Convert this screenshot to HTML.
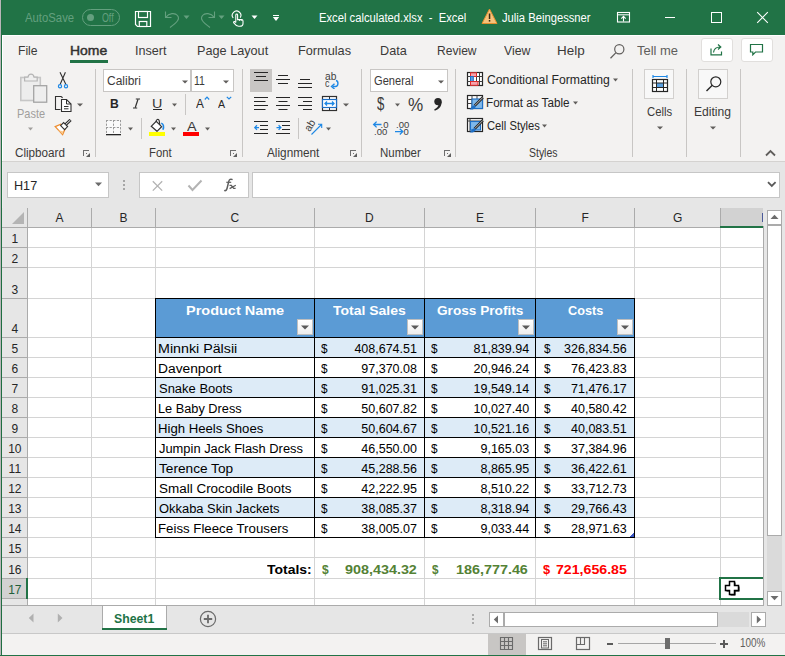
<!DOCTYPE html>
<html><head><meta charset="utf-8"><title>Excel</title>
<style>
html,body{margin:0;padding:0;}
body{width:785px;height:656px;overflow:hidden;position:relative;background:#F3F2F1;font-family:'Liberation Sans', sans-serif;}
#r{position:absolute;left:0;top:0;width:785px;height:656px;overflow:hidden;}
#r div,#r svg{position:absolute;box-sizing:content-box;}
#r .t{white-space:pre;}
</style></head><body><div id="r">
<div style="left:0px;top:0px;width:785px;height:656px;background:#F3F2F1;"></div>
<div style="left:0px;top:0px;width:785px;height:35px;background:#217346;"></div>
<div style="left:2px;top:35px;width:783px;height:1px;background:#FFFFFF;"></div>
<div style="left:0px;top:161px;width:785px;height:47px;background:#E6E6E6;"></div>
<div style="left:0px;top:161px;width:785px;height:1px;background:#D4D2D0;"></div>
<div style="left:0px;top:208px;width:785px;height:398px;background:#E6E6E6;"></div>
<div style="left:0px;top:605px;width:785px;height:28px;background:#E6E6E6;"></div>
<div style="left:0px;top:634px;width:785px;height:22px;background:#F3F2F1;"></div>
<div class="t" style="left:25.30px;top:12.00px;font: 400 12px/12px 'Liberation Sans', sans-serif;color:#64A07F;transform:scaleX(0.9434);transform-origin:0 0;">AutoSave</div>
<div style="left:82px;top:9px;width:36px;height:15px;border:1px solid #64A07F;border-radius:9px;"></div>
<div style="left:87px;top:14px;width:7px;height:7px;background:#64A07F;border-radius:50%;"></div>
<div class="t" style="left:101.50px;top:12.00px;font: 400 12px/12px 'Liberation Sans', sans-serif;color:#64A07F;transform:scaleX(0.7355);transform-origin:0 0;">Off</div>
<svg style="left:134px;top:10px;" width="18" height="18" viewBox="0 0 18 18"><path d="M1.5 1.5 H16.5 V16.5 H3.5 L1.5 14.5 Z" fill="none" stroke="#fff" stroke-width="1.2"/><rect x="4.5" y="1.5" width="9" height="6" fill="none" stroke="#fff" stroke-width="1.2"/><rect x="5.3" y="11.5" width="7.5" height="5" fill="none" stroke="#fff" stroke-width="1.2"/></svg>
<svg style="left:162px;top:9px;" width="20" height="20" viewBox="0 0 20 20"><path d="M3.5 2.5 V8.5 H9.5" fill="none" stroke="#64A07F" stroke-width="1.1"/><path d="M3.8 8.3 C7 4 13 3.5 15.5 6.5 C18 9.5 16 13 8 18.5" fill="none" stroke="#64A07F" stroke-width="1.1"/></svg>
<svg style="left:183px;top:15px;" width="8" height="5" viewBox="0 0 8 5"><path d="M0.5 0.5 H6.5 L3.5 4 Z" fill="#64A07F"/></svg>
<svg style="left:198px;top:9px;" width="20" height="20" viewBox="0 0 20 20"><path d="M16.5 2.5 V8.5 H10.5" fill="none" stroke="#64A07F" stroke-width="1.1"/><path d="M16.2 8.3 C13 4 7 3.5 4.5 6.5 C2 9.5 4 13 12 18.5" fill="none" stroke="#64A07F" stroke-width="1.1"/></svg>
<svg style="left:218px;top:15px;" width="8" height="5" viewBox="0 0 8 5"><path d="M0.5 0.5 H6.5 L3.5 4 Z" fill="#64A07F"/></svg>
<svg style="left:230px;top:10px;" width="15" height="18" viewBox="0 0 15 18"><path d="M3.2 8 A4.3 4.3 0 1 1 10.2 7.6" fill="none" stroke="#fff" stroke-width="1.1"/><path d="M5.8 12.5 V4.9 A0.9 0.9 0 0 1 7.6 4.9 V9.6 H11.6 C12.6 9.6 13 10.2 13 11 V13.5 C13 15.3 11.8 16.3 9.8 16.3 H8.6 C6.8 16.3 5.6 15.3 3.8 12.9 C3.2 12.1 3.8 11.2 4.6 11.6 L5.8 12.5" fill="none" stroke="#fff" stroke-width="1.1"/><path d="M9.5 9.6 V11 M11.3 9.6 V11" stroke="#fff" stroke-width="0.8"/></svg>
<svg style="left:251px;top:15px;" width="8" height="5" viewBox="0 0 8 5"><path d="M0.5 0.5 H6.5 L3.5 4 Z" fill="#fff"/></svg>
<div style="left:273px;top:15px;width:6px;height:1px;background:#fff;"></div>
<svg style="left:272px;top:16px;" width="8" height="6" viewBox="0 0 8 6"><path d="M0.8 1 H7.2 L4 5 Z" fill="#fff"/></svg>
<div class="t" style="left:319.00px;top:12.00px;font: 400 12px/12px 'Liberation Sans', sans-serif;color:#FFFFFF;transform:scaleX(0.9348);transform-origin:0 0;">Excel calculated.xlsx  -  Excel</div>
<svg style="left:481px;top:8px;" width="17" height="17" viewBox="0 0 17 17"><path d="M8.5 1 L16 15.5 H1 Z" fill="#F7C27A" stroke="#E58F2E" stroke-width="1"/><rect x="7.8" y="5.5" width="1.5" height="5.5" fill="#3A2A10"/><rect x="7.8" y="12" width="1.5" height="1.6" fill="#3A2A10"/></svg>
<div class="t" style="left:502.00px;top:12.00px;font: 400 12px/12px 'Liberation Sans', sans-serif;color:#FFFFFF;transform:scaleX(0.9353);transform-origin:0 0;">Julia Beingessner</div>
<svg style="left:616px;top:11px;" width="15" height="12" viewBox="0 0 15 12"><rect x="1.5" y="1.5" width="12" height="9.5" fill="none" stroke="#fff" stroke-width="1.1"/><path d="M1.5 3.8 H13.5" stroke="#fff" stroke-width="1"/><path d="M7.5 10.5 V5.5 M5.3 7.6 L7.5 5.4 L9.7 7.6" fill="none" stroke="#fff" stroke-width="1.1"/></svg>
<div style="left:665px;top:17px;width:10px;height:1px;background:#fff;"></div>
<div style="left:711px;top:12px;width:9px;height:9px;border:1px solid #fff;"></div>
<svg style="left:756px;top:11px;" width="13" height="13" viewBox="0 0 13 13"><path d="M1.2 1.2 L11.8 11.8 M11.8 1.2 L1.2 11.8" stroke="#fff" stroke-width="1.1"/></svg>
<div class="t" style="left:18.37px;top:44.00px;font: 400 13px/13px 'Liberation Sans', sans-serif;color:#3B3A39;transform:scaleX(0.9332);transform-origin:0 0;">File</div>
<div class="t" style="left:69.63px;top:44.00px;font: 400 13px/13px 'Liberation Sans', sans-serif;color:#323130;transform:scaleX(1.0733);transform-origin:0 0;-webkit-text-stroke:0.45px #323130;">Home</div>
<div style="left:70px;top:60px;width:38px;height:3px;background:#217346;"></div>
<div class="t" style="left:134.53px;top:44.00px;font: 400 13px/13px 'Liberation Sans', sans-serif;color:#3B3A39;transform:scaleX(0.9686);transform-origin:0 0;">Insert</div>
<div class="t" style="left:196.82px;top:44.00px;font: 400 13px/13px 'Liberation Sans', sans-serif;color:#3B3A39;transform:scaleX(0.9752);transform-origin:0 0;">Page Layout</div>
<div class="t" style="left:298.02px;top:44.00px;font: 400 13px/13px 'Liberation Sans', sans-serif;color:#3B3A39;transform:scaleX(0.9781);transform-origin:0 0;">Formulas</div>
<div class="t" style="left:380.33px;top:44.00px;font: 400 13px/13px 'Liberation Sans', sans-serif;color:#3B3A39;transform:scaleX(0.9732);transform-origin:0 0;">Data</div>
<div class="t" style="left:436.87px;top:44.00px;font: 400 13px/13px 'Liberation Sans', sans-serif;color:#3B3A39;transform:scaleX(0.9281);transform-origin:0 0;">Review</div>
<div class="t" style="left:504.00px;top:44.00px;font: 400 13px/13px 'Liberation Sans', sans-serif;color:#3B3A39;transform:scaleX(0.9456);transform-origin:0 0;">View</div>
<div class="t" style="left:556.96px;top:44.00px;font: 400 13px/13px 'Liberation Sans', sans-serif;color:#3B3A39;transform:scaleX(1.0350);transform-origin:0 0;">Help</div>
<svg style="left:609px;top:43px;" width="17" height="17" viewBox="0 0 17 17"><circle cx="10.3" cy="6.3" r="4.6" fill="none" stroke="#605E5C" stroke-width="1.2"/><path d="M7 9.6 L1.5 15.2" stroke="#605E5C" stroke-width="1.3"/></svg>
<div class="t" style="left:636.50px;top:44.00px;font: 400 13px/13px 'Liberation Sans', sans-serif;color:#605E5C;transform:scaleX(0.9964);transform-origin:0 0;">Tell me</div>
<div style="left:701px;top:38px;width:30px;height:22px;border:1px solid #E1DFDD;border-radius:3px;background:#FFFFFF;"></div>
<svg style="left:709px;top:43px;" width="15" height="13" viewBox="0 0 15 13"><path d="M2 5.5 V11.8 H12.5 V8.5" fill="none" stroke="#217346" stroke-width="1.2"/><path d="M4.5 9.5 C5 5.5 7.5 4 11 4 M9 1.5 L11.8 4 L9 6.5" fill="none" stroke="#217346" stroke-width="1.2"/></svg>
<div style="left:741px;top:38px;width:30px;height:22px;border:1px solid #E1DFDD;border-radius:3px;background:#FFFFFF;"></div>
<svg style="left:749px;top:43px;" width="15" height="13" viewBox="0 0 15 13"><path d="M1.5 1.5 H13.5 V9 H6.5 L3.8 11.8 V9 H1.5 Z" fill="none" stroke="#217346" stroke-width="1.2"/></svg>
<svg style="left:19px;top:72px;" width="30" height="32" viewBox="0 0 30 32"><rect x="1.8" y="5.5" width="19.5" height="23" fill="#EDEDED" stroke="#C6C6C6" stroke-width="1.6"/><path d="M5.6 9 V5.2 H9 C9.5 1.2 14.5 1.2 15 5.2 H18.2 V9 Z" fill="#EFEFEF" stroke="#B5B5B5" stroke-width="1.2"/><rect x="14.7" y="13.7" width="13" height="16.5" fill="#EEEEEE" stroke="#A4A4A4" stroke-width="1.3"/></svg>
<div class="t" style="left:17.16px;top:107.00px;font: 400 13px/13px 'Liberation Sans', sans-serif;color:#A19F9D;transform:scaleX(0.8434);transform-origin:0 0;">Paste</div>
<svg style="left:28px;top:127px;" width="5" height="4" viewBox="0 0 5 4"><path d="M0 0.5 H5 L2.5 3.6 Z" fill="#A19F9D"/></svg>
<svg style="left:57px;top:71px;" width="13" height="18" viewBox="0 0 13 18"><path d="M3 1.2 L8.8 13.2 M8.4 1.2 L3.2 13.2" stroke="#303030" stroke-width="1.1"/><circle cx="3" cy="15.2" r="1.6" fill="none" stroke="#1E88E5" stroke-width="1.2"/><circle cx="9" cy="15.2" r="1.6" fill="none" stroke="#1E88E5" stroke-width="1.2"/></svg>
<svg style="left:54px;top:95px;" width="19" height="18" viewBox="0 0 19 18"><path d="M7.2 1.5 H1.5 V14.5 H6.5 M7.2 1.5 L8.6 2.9" fill="none" stroke="#303030" stroke-width="1.1"/><path d="M7.5 4.5 H12.5 L17 9 V16.5 H7.5 Z" fill="#fff" stroke="#303030" stroke-width="1.1"/><path d="M12.5 4.5 V9 H17" fill="none" stroke="#303030" stroke-width="1"/><path d="M10 11.5 H14.5 M10 13.8 H14.5" stroke="#303030" stroke-width="1"/></svg>
<svg style="left:77px;top:103px;" width="6" height="4" viewBox="0 0 6 4"><path d="M0 0.5 H6 L3.0 3.6 Z" fill="#605E5C"/></svg>
<svg style="left:54px;top:119px;" width="19" height="17" viewBox="0 0 19 17"><path d="M1.2 7.6 L6.8 5.2 L11.2 9.6 L8.6 15.6 Z" fill="#fff" stroke="#ED8B2C" stroke-width="1.3"/><path d="M4 11 L9.5 12.5 L8.6 15.2 Z" fill="#F9C98E"/><path d="M6.6 6.6 L9.6 3.6 L13.6 7.6 L10.6 10.6 Z" fill="#fff" stroke="#303030" stroke-width="1.1"/><path d="M11.6 5.6 L16.6 0.9" stroke="#303030" stroke-width="3"/><path d="M11.8 5.4 L16.4 1.1" stroke="#fff" stroke-width="1"/></svg>
<div class="t" style="left:15.00px;top:147.00px;font: 400 12px/12px 'Liberation Sans', sans-serif;color:#3B3A39;transform:scaleX(0.9726);transform-origin:0 0;">Clipboard</div>
<svg style="left:83px;top:150px;" width="8" height="8" viewBox="0 0 8 8"><rect x="0" y="0" width="6" height="1" fill="#6E6E6E"/><rect x="0" y="0" width="1" height="6" fill="#6E6E6E"/><rect x="3" y="3" width="1" height="1" fill="#6E6E6E"/><path d="M7 3 V7 H3 Z" fill="#5E5E5E"/></svg>
<div style="left:95px;top:69px;width:1px;height:88px;background:#C8C6C4;"></div>
<div style="left:103px;top:69px;width:86px;height:21px;border:1px solid #C8C6C4;background:#FFFFFF;"></div>
<div style="left:191px;top:69px;width:41px;height:21px;border:1px solid #C8C6C4;background:#FFFFFF;"></div>
<div class="t" style="left:106.80px;top:75.00px;font: 400 12.5px/12.5px 'Liberation Sans', sans-serif;color:#3B3A39;transform:scaleX(0.9582);transform-origin:0 0;">Calibri</div>
<svg style="left:182px;top:80px;" width="6" height="4" viewBox="0 0 6 4"><path d="M0 0.5 H6 L3.0 3.6 Z" fill="#605E5C"/></svg>
<div class="t" style="left:194.40px;top:75.00px;font: 400 12.5px/12.5px 'Liberation Sans', sans-serif;color:#3B3A39;transform:scaleX(0.8369);transform-origin:0 0;">11</div>
<svg style="left:223px;top:80px;" width="6" height="4" viewBox="0 0 6 4"><path d="M0 0.5 H6 L3.0 3.6 Z" fill="#605E5C"/></svg>
<div class="t" style="left:109.80px;top:97.00px;font: 700 13px/13px 'Liberation Sans', sans-serif;color:#262626;transform:scaleX(0.9333);transform-origin:0 0;">B</div>
<svg style="left:132px;top:98px;" width="9" height="11" viewBox="0 0 9 11"><path d="M6 1.2 L3.2 9.8" stroke="#303030" stroke-width="1.2"/><path d="M3.8 1 H8 M1 10 H5.2" stroke="#303030" stroke-width="1"/></svg>
<div class="t" style="left:152.10px;top:97.00px;font: 400 13px/13px 'Liberation Sans', sans-serif;color:#3A3A3A;transform:scaleX(1.1000);transform-origin:0 0;">U</div>
<div style="left:153px;top:109px;width:9px;height:1px;background:#262626;"></div>
<svg style="left:172px;top:103px;" width="5" height="4" viewBox="0 0 5 4"><path d="M0 0.5 H5 L2.5 3.6 Z" fill="#605E5C"/></svg>
<div style="left:185px;top:94px;width:1px;height:21px;background:#C8C6C4;"></div>
<div class="t" style="left:196.30px;top:98.00px;font: 400 12.5px/12.5px 'Liberation Sans', sans-serif;color:#262626;transform:scaleX(0.9444);transform-origin:0 0;">A</div>
<svg style="left:204px;top:96px;" width="6" height="4" viewBox="0 0 6 4"><path d="M0.8 3.5 L3 1.2 L5.2 3.5" fill="none" stroke="#1E88E5" stroke-width="1.2"/></svg>
<div class="t" style="left:218.00px;top:99.00px;font: 400 11px/11px 'Liberation Sans', sans-serif;color:#262626;transform:scaleX(0.9625);transform-origin:0 0;">A</div>
<svg style="left:226px;top:96px;" width="6" height="4" viewBox="0 0 6 4"><path d="M0.8 0.8 L3 3 L5.2 0.8" fill="none" stroke="#1E88E5" stroke-width="1.2"/></svg>
<svg style="left:106px;top:120px;" width="16" height="16" viewBox="0 0 16 16"><rect x="0.5" y="0.5" width="14" height="13.5" fill="#FAFAFA"/><path d="M0 0.5 H15 M0 7.5 H15 M0.5 0 V14 M7.5 0 V14 M14.5 0 V14" fill="none" stroke="#9A9A9A" stroke-width="1" stroke-dasharray="2.2 1.4"/><rect x="0" y="14" width="15" height="1.3" fill="#262626"/></svg>
<svg style="left:128px;top:127px;" width="5" height="4" viewBox="0 0 5 4"><path d="M0 0.5 H5 L2.5 3.6 Z" fill="#605E5C"/></svg>
<div style="left:141px;top:118px;width:1px;height:21px;background:#C8C6C4;"></div>
<svg style="left:149px;top:118px;" width="17" height="14" viewBox="0 0 17 14"><path d="M2.2 8.3 L7.2 3.3 L12.6 8.7 L8 13.3 Z" fill="#fff" stroke="#303030" stroke-width="1.2"/><path d="M7.2 3.6 C6.8 1.2 9.6 0.6 10.2 2.6 L10.8 6.8" fill="none" stroke="#303030" stroke-width="1.1"/><path d="M12.2 5.2 C14.4 5.6 15.2 8.4 13.9 11.8" fill="none" stroke="#1E88E5" stroke-width="1.6"/></svg>
<div style="left:149px;top:132px;width:16px;height:4px;background:#FFFF00;"></div>
<svg style="left:171px;top:127px;" width="5" height="4" viewBox="0 0 5 4"><path d="M0 0.5 H5 L2.5 3.6 Z" fill="#605E5C"/></svg>
<div class="t" style="left:186.70px;top:120.00px;font: 400 13.5px/13.5px 'Liberation Sans', sans-serif;color:#3A3A3A;transform:scaleX(1.0667);transform-origin:0 0;">A</div>
<div style="left:183px;top:132px;width:16px;height:4px;background:#FF0000;"></div>
<svg style="left:205px;top:127px;" width="5" height="4" viewBox="0 0 5 4"><path d="M0 0.5 H5 L2.5 3.6 Z" fill="#605E5C"/></svg>
<div class="t" style="left:148.50px;top:147.00px;font: 400 12px/12px 'Liberation Sans', sans-serif;color:#3B3A39;transform:scaleX(0.9442);transform-origin:0 0;">Font</div>
<svg style="left:230px;top:150px;" width="8" height="8" viewBox="0 0 8 8"><rect x="0" y="0" width="6" height="1" fill="#6E6E6E"/><rect x="0" y="0" width="1" height="6" fill="#6E6E6E"/><rect x="3" y="3" width="1" height="1" fill="#6E6E6E"/><path d="M7 3 V7 H3 Z" fill="#5E5E5E"/></svg>
<div style="left:242px;top:69px;width:1px;height:88px;background:#C8C6C4;"></div>
<div style="left:250px;top:69px;width:22px;height:23px;background:#C8C6C4;"></div>
<svg style="left:254px;top:71px;" width="14" height="20" viewBox="0 0 14 20"><rect x="0" y="1" width="14" height="1" fill="#262626"/><rect x="2.0" y="5" width="10" height="1" fill="#262626"/><rect x="0" y="9" width="14" height="1" fill="#262626"/></svg>
<svg style="left:276px;top:73px;" width="14" height="20" viewBox="0 0 14 20"><rect x="2.0" y="2" width="10" height="1" fill="#262626"/><rect x="0" y="6" width="14" height="1" fill="#262626"/><rect x="2.0" y="10" width="10" height="1" fill="#262626"/></svg>
<svg style="left:298px;top:77px;" width="14" height="20" viewBox="0 0 14 20"><rect x="2.0" y="2" width="10" height="1" fill="#262626"/><rect x="0" y="6" width="14" height="1" fill="#262626"/><rect x="0" y="10" width="14" height="1" fill="#262626"/></svg>
<div class="t" style="left:324.70px;top:71.00px;font: 400 10.5px/10.5px 'Liberation Sans', sans-serif;color:#404040;transform:scaleX(0.9713);transform-origin:0 0;">ab</div>
<div class="t" style="left:324.70px;top:78.00px;font: 400 10.5px/10.5px 'Liberation Sans', sans-serif;color:#404040;transform:scaleX(0.8400);transform-origin:0 0;">c</div>
<svg style="left:329px;top:79px;" width="11" height="10" viewBox="0 0 11 10"><path d="M4 7.5 H6.5 C9.5 7.5 9.8 2 7 1.5" fill="none" stroke="#1E88E5" stroke-width="1.4"/><path d="M5.5 4.7 L2.5 7.5 L5.5 10" fill="none" stroke="#1E88E5" stroke-width="1.4"/></svg>
<svg style="left:254px;top:96px;" width="14" height="20" viewBox="0 0 14 20"><rect x="0" y="1" width="14" height="1" fill="#262626"/><rect x="2.5" y="5" width="9" height="1" fill="#262626"/><rect x="0" y="9" width="14" height="1" fill="#262626"/><rect x="2.5" y="13" width="9" height="1" fill="#262626"/></svg>
<svg style="left:254px;top:96px;" width="14" height="15" viewBox="0 0 14 15"><rect x="0" y="1" width="14" height="1" fill="#262626"/><rect x="0" y="5" width="9" height="1" fill="#262626"/><rect x="0" y="9" width="14" height="1" fill="#262626"/><rect x="0" y="13" width="9" height="1" fill="#262626"/></svg>
<svg style="left:276px;top:96px;" width="14" height="15" viewBox="0 0 14 15"><rect x="0" y="1" width="14" height="1" fill="#262626"/><rect x="2.5" y="5" width="9" height="1" fill="#262626"/><rect x="0" y="9" width="14" height="1" fill="#262626"/><rect x="2.5" y="13" width="9" height="1" fill="#262626"/></svg>
<svg style="left:298px;top:96px;" width="14" height="15" viewBox="0 0 14 15"><rect x="0" y="1" width="14" height="1" fill="#262626"/><rect x="5" y="5" width="9" height="1" fill="#262626"/><rect x="0" y="9" width="14" height="1" fill="#262626"/><rect x="5" y="13" width="9" height="1" fill="#262626"/></svg>
<svg style="left:321px;top:95px;" width="17" height="17" viewBox="0 0 17 17"><rect x="1.5" y="1.5" width="14" height="14" fill="#fff" stroke="#303030" stroke-width="1.2"/><path d="M8.5 1.5 V4.5 M8.5 12.5 V15.5" stroke="#303030" stroke-width="1"/><rect x="1.5" y="4.5" width="14" height="8" fill="#fff" stroke="#1E6FC5" stroke-width="1.2"/><path d="M4 8.5 H13 M6 6.5 L4 8.5 L6 10.5 M11 6.5 L13 8.5 L11 10.5" fill="none" stroke="#1E88E5" stroke-width="1.3"/></svg>
<svg style="left:343px;top:103px;" width="6" height="4" viewBox="0 0 6 4"><path d="M0 0.5 H6 L3.0 3.6 Z" fill="#605E5C"/></svg>
<svg style="left:254px;top:120px;" width="15" height="15" viewBox="0 0 15 15"><rect x="0" y="1" width="14" height="1" fill="#262626"/><rect x="6" y="5" width="8" height="1" fill="#262626"/><rect x="6" y="9" width="8" height="1" fill="#262626"/><rect x="0" y="13" width="14" height="1" fill="#262626"/><path d="M5 7.6 H0.8 M3 5.3 L0.8 7.6 L3 9.9" fill="none" stroke="#1E88E5" stroke-width="1.3"/></svg>
<svg style="left:276px;top:120px;" width="15" height="15" viewBox="0 0 15 15"><rect x="0" y="1" width="14" height="1" fill="#262626"/><rect x="6" y="5" width="8" height="1" fill="#262626"/><rect x="6" y="9" width="8" height="1" fill="#262626"/><rect x="0" y="13" width="14" height="1" fill="#262626"/><path d="M0.5 7.6 H4.8 M2.6 5.3 L4.8 7.6 L2.6 9.9" fill="none" stroke="#1E88E5" stroke-width="1.3"/></svg>
<div style="left:298px;top:118px;width:1px;height:21px;background:#C8C6C4;"></div>
<div class="t" style="left:304px;top:120px;font:400 10.5px/11px 'Liberation Sans';color:#404040;transform:rotate(-58deg);transform-origin:50% 50%;">ab</div>
<svg style="left:310px;top:122px;" width="14" height="14" viewBox="0 0 14 14"><path d="M1.5 12.5 L11.5 2.5 M8 2.3 H11.7 V6" fill="none" stroke="#1E88E5" stroke-width="1.1"/></svg>
<svg style="left:326px;top:127px;" width="5" height="4" viewBox="0 0 5 4"><path d="M0 0.5 H5 L2.5 3.6 Z" fill="#605E5C"/></svg>
<div class="t" style="left:267.00px;top:147.00px;font: 400 12px/12px 'Liberation Sans', sans-serif;color:#3B3A39;transform:scaleX(0.9810);transform-origin:0 0;">Alignment</div>
<svg style="left:350px;top:150px;" width="8" height="8" viewBox="0 0 8 8"><rect x="0" y="0" width="6" height="1" fill="#6E6E6E"/><rect x="0" y="0" width="1" height="6" fill="#6E6E6E"/><rect x="3" y="3" width="1" height="1" fill="#6E6E6E"/><path d="M7 3 V7 H3 Z" fill="#5E5E5E"/></svg>
<div style="left:361px;top:69px;width:1px;height:88px;background:#C8C6C4;"></div>
<div style="left:370px;top:69px;width:76px;height:21px;border:1px solid #C8C6C4;background:#FFFFFF;"></div>
<div class="t" style="left:373.80px;top:75.00px;font: 400 12.5px/12.5px 'Liberation Sans', sans-serif;color:#3B3A39;transform:scaleX(0.8880);transform-origin:0 0;">General</div>
<svg style="left:438px;top:80px;" width="6" height="4" viewBox="0 0 6 4"><path d="M0 0.5 H6 L3.0 3.6 Z" fill="#605E5C"/></svg>
<div class="t" style="left:376.90px;top:95.00px;font: 400 18px/18px 'Liberation Sans', sans-serif;color:#3A3A3A;transform:scaleX(0.7300);transform-origin:0 0;">$</div>
<svg style="left:395px;top:103px;" width="5" height="4" viewBox="0 0 5 4"><path d="M0 0.5 H5 L2.5 3.6 Z" fill="#605E5C"/></svg>
<div class="t" style="left:407.50px;top:96.00px;font: 400 18.5px/18.5px 'Liberation Sans', sans-serif;color:#3A3A3A;transform:scaleX(0.9250);transform-origin:0 0;">%</div>
<svg style="left:433px;top:97px;" width="10" height="15" viewBox="0 0 10 15"><circle cx="5" cy="4.6" r="3.7" fill="#262626"/><path d="M8.6 4.6 C8.8 9 6.5 12.3 1.8 13.8 L1.2 12.6 C4.2 11 5.5 9 5.6 7 Z" fill="#262626"/></svg>
<svg style="left:372px;top:119px;" width="18" height="18" viewBox="0 0 18 18"><path d="M9.5 5.5 H1.8 M4.6 2.6 L1.6 5.5 L4.6 8.4" fill="none" stroke="#1E88E5" stroke-width="1.3"/><text x="8.6" y="8.6" font-family="Liberation Sans" font-size="9.5" fill="#404040">.0</text><text x="2" y="16" font-family="Liberation Sans" font-size="9.5" fill="#404040">.00</text></svg>
<svg style="left:394px;top:119px;" width="18" height="18" viewBox="0 0 18 18"><text x="2" y="8.6" font-family="Liberation Sans" font-size="9.5" fill="#404040">.00</text><text x="9.6" y="16" font-family="Liberation Sans" font-size="9.5" fill="#404040">0</text><path d="M1 12.6 H8.6 M5.8 9.7 L8.8 12.6 L5.8 15.5" fill="none" stroke="#1E88E5" stroke-width="1.3"/></svg>
<div class="t" style="left:380.40px;top:147.00px;font: 400 12px/12px 'Liberation Sans', sans-serif;color:#3B3A39;transform:scaleX(0.9559);transform-origin:0 0;">Number</div>
<svg style="left:444px;top:150px;" width="8" height="8" viewBox="0 0 8 8"><rect x="0" y="0" width="6" height="1" fill="#6E6E6E"/><rect x="0" y="0" width="1" height="6" fill="#6E6E6E"/><rect x="3" y="3" width="1" height="1" fill="#6E6E6E"/><path d="M7 3 V7 H3 Z" fill="#5E5E5E"/></svg>
<div style="left:455px;top:69px;width:1px;height:88px;background:#C8C6C4;"></div>
<svg style="left:466px;top:71px;" width="18" height="16" viewBox="0 0 18 16"><rect x="1.5" y="1.5" width="15" height="13" fill="#fff" stroke="#262626" stroke-width="1.2"/><path d="M4.5 1.5 V14.5 M10.5 1.5 V14.5 M13.5 1.5 V14.5 M1.5 5.5 H16.5 M1.5 10.5 H16.5" stroke="#404040" stroke-width="1"/><rect x="4.5" y="1.8" width="6" height="3.7" fill="#F4A3AC" stroke="#E02B2B" stroke-width="1"/><rect x="4.5" y="5.5" width="2.8" height="5" fill="#5AA0E0" stroke="#1E6FC5" stroke-width="1"/><rect x="4.5" y="10.5" width="7.5" height="3.8" fill="#F4A3AC" stroke="#E02B2B" stroke-width="1"/></svg>
<div class="t" style="left:486.70px;top:74.00px;font: 400 12.5px/12.5px 'Liberation Sans', sans-serif;color:#262626;transform:scaleX(0.9769);transform-origin:0 0;">Conditional Formatting</div>
<svg style="left:613px;top:78px;" width="5" height="4" viewBox="0 0 5 4"><path d="M0 0.5 H5 L2.5 3.6 Z" fill="#605E5C"/></svg>
<svg style="left:466px;top:94px;" width="18" height="17" viewBox="0 0 18 17"><rect x="1.5" y="1.5" width="15" height="13" fill="#fff" stroke="#262626" stroke-width="1.2"/><path d="M6 1.5 V14.5 M11 1.5 V14.5 M1.5 5.5 H16.5 M1.5 9.5 H16.5" stroke="#404040" stroke-width="1"/><rect x="6" y="5" width="10.5" height="9.5" fill="#7FB8EA" stroke="#1E6FC5" stroke-width="1.1"/><path d="M16.8 3.5 L8.5 11.8" stroke="#262626" stroke-width="2.6"/><path d="M16.8 3.5 L8.5 11.8" stroke="#C8C8C8" stroke-width="0.9"/><path d="M8.8 11.2 C6 11 5.5 14 3.5 15.5 C6.5 16 9.5 15 9.8 12.2 Z" fill="#1E6FC5"/></svg>
<div class="t" style="left:486.07px;top:97.00px;font: 400 12.5px/12.5px 'Liberation Sans', sans-serif;color:#262626;transform:scaleX(0.9338);transform-origin:0 0;">Format as Table</div>
<svg style="left:573px;top:101px;" width="5" height="4" viewBox="0 0 5 4"><path d="M0 0.5 H5 L2.5 3.6 Z" fill="#605E5C"/></svg>
<svg style="left:466px;top:117px;" width="18" height="17" viewBox="0 0 18 17"><rect x="1.5" y="1.5" width="15" height="13" fill="#fff" stroke="#262626" stroke-width="1.2"/><path d="M4 1.5 V14.5 M1.5 4 H16.5" stroke="#404040" stroke-width="1"/><rect x="4.5" y="4.5" width="10" height="8.5" fill="#7FB8EA" stroke="#1E6FC5" stroke-width="1.1"/><path d="M16.8 3.5 L8.5 11.8" stroke="#262626" stroke-width="2.6"/><path d="M16.8 3.5 L8.5 11.8" stroke="#C8C8C8" stroke-width="0.9"/><path d="M8.8 11.2 C6 11 5.5 14 3.5 15.5 C6.5 16 9.5 15 9.8 12.2 Z" fill="#1E6FC5"/></svg>
<div class="t" style="left:486.60px;top:120.00px;font: 400 12.5px/12.5px 'Liberation Sans', sans-serif;color:#262626;transform:scaleX(0.8963);transform-origin:0 0;">Cell Styles</div>
<svg style="left:542px;top:124px;" width="5" height="4" viewBox="0 0 5 4"><path d="M0 0.5 H5 L2.5 3.6 Z" fill="#605E5C"/></svg>
<div class="t" style="left:529.00px;top:147.00px;font: 400 12px/12px 'Liberation Sans', sans-serif;color:#3B3A39;transform:scaleX(0.8722);transform-origin:0 0;">Styles</div>
<div style="left:632px;top:69px;width:1px;height:88px;background:#C8C6C4;"></div>
<div style="left:644px;top:69px;width:28px;height:28px;border:1px solid #D2D0CE;background:#F8F8F8;"></div>
<svg style="left:651px;top:75px;" width="18" height="18" viewBox="0 0 18 18"><path d="M2 1.5 H16 M2 0 V3 M16 0 V3" stroke="#1E88E5" stroke-width="1.2"/><rect x="1.5" y="4.5" width="15" height="12" fill="#fff" stroke="#262626" stroke-width="1.2"/><rect x="5.5" y="8" width="7" height="4.5" fill="#5AA0E0"/><path d="M1.5 8 H16.5 M1.5 12.5 H16.5 M5.5 4.5 V16.5 M12.5 4.5 V16.5" stroke="#262626" stroke-width="1"/></svg>
<div class="t" style="left:647.40px;top:106.00px;font: 400 12.5px/12.5px 'Liberation Sans', sans-serif;color:#3B3A39;transform:scaleX(0.9044);transform-origin:0 0;">Cells</div>
<svg style="left:657px;top:126px;" width="6" height="4" viewBox="0 0 6 4"><path d="M0 0.5 H6 L3.0 3.6 Z" fill="#605E5C"/></svg>
<div style="left:686px;top:69px;width:1px;height:88px;background:#C8C6C4;"></div>
<div style="left:698px;top:69px;width:28px;height:28px;border:1px solid #D2D0CE;background:#F8F8F8;"></div>
<svg style="left:705px;top:75px;" width="18" height="18" viewBox="0 0 18 18"><circle cx="10.8" cy="6.8" r="5" fill="none" stroke="#262626" stroke-width="1.2"/><path d="M7.3 10.3 L1.5 16" stroke="#262626" stroke-width="1.4"/></svg>
<div class="t" style="left:694.33px;top:106.00px;font: 400 12.5px/12.5px 'Liberation Sans', sans-serif;color:#3B3A39;transform:scaleX(0.9687);transform-origin:0 0;">Editing</div>
<svg style="left:710px;top:126px;" width="6" height="4" viewBox="0 0 6 4"><path d="M0 0.5 H6 L3.0 3.6 Z" fill="#605E5C"/></svg>
<div style="left:740px;top:69px;width:1px;height:88px;background:#C8C6C4;"></div>
<svg style="left:765px;top:149px;" width="11" height="8" viewBox="0 0 11 8"><path d="M1 6.5 L5.5 2 L10 6.5" fill="none" stroke="#605E5C" stroke-width="1.8"/></svg>
<div style="left:7px;top:172px;width:100px;height:24px;border:1px solid #C6C6C6;background:#FFFFFF;"></div>
<div class="t" style="left:13.59px;top:180.00px;font: 400 12.5px/12.5px 'Liberation Sans', sans-serif;color:#262626;transform:scaleX(1.0101);transform-origin:0 0;">H17</div>
<svg style="left:95px;top:182px;" width="8" height="5" viewBox="0 0 8 5"><path d="M0 0.5 H7 L3.5 4.2 Z" fill="#6B6B6B"/></svg>
<div style="left:123px;top:180px;width:2px;height:2px;background:#A6A6A6;"></div>
<div style="left:123px;top:184px;width:2px;height:2px;background:#A6A6A6;"></div>
<div style="left:123px;top:188px;width:2px;height:2px;background:#A6A6A6;"></div>
<div style="left:139px;top:172px;width:108px;height:24px;border:1px solid #C6C6C6;background:#FFFFFF;"></div>
<svg style="left:151px;top:180px;" width="14" height="12" viewBox="0 0 14 12"><path d="M1.8 1.2 L11.2 10.6 M11.2 1.2 L1.8 10.6" stroke="#B3B3B3" stroke-width="1.3"/></svg>
<svg style="left:187px;top:179px;" width="16" height="13" viewBox="0 0 16 13"><path d="M1.5 6.5 L5.5 11 L14.5 1.5" fill="none" stroke="#B3B3B3" stroke-width="2"/></svg>
<svg style="left:222px;top:177px;" width="16" height="16" viewBox="0 0 16 16"><path d="M2.2 13.3 C3.6 14.2 4.6 13.2 5.1 11.2 L6.7 4.6 C7.3 2.4 8.6 1.7 10.6 2.6" fill="none" stroke="#5E5E5E" stroke-width="1.5"/><path d="M4.3 5.3 H9.2" stroke="#5E5E5E" stroke-width="1.2"/><path d="M7.5 8.3 H9.3 L11.7 11.3 H13.6 M13.8 8.3 L7.6 11.6" fill="none" stroke="#5E5E5E" stroke-width="1.3"/></svg>
<div style="left:252px;top:172px;width:526px;height:24px;border:1px solid #C6C6C6;background:#FFFFFF;"></div>
<svg style="left:767px;top:181px;" width="10" height="7" viewBox="0 0 10 7"><path d="M1 1.2 L4.8 5 L8.6 1.2" fill="none" stroke="#5A5A5A" stroke-width="1.8"/></svg>
<div style="left:28px;top:228px;width:735px;height:377px;background:#FFFFFF;"></div>
<div style="left:721px;top:208px;width:42px;height:18px;background:#D2D2D2;"></div>
<div style="left:2px;top:579px;width:25px;height:19px;background:#D2D2D2;"></div>
<div style="left:27px;top:208px;width:1px;height:19px;background:#ABABAB;"></div>
<div style="left:27px;top:228px;width:1px;height:377px;background:#ABABAB;"></div>
<div style="left:91px;top:208px;width:1px;height:19px;background:#ABABAB;"></div>
<div style="left:91px;top:228px;width:1px;height:377px;background:#D4D4D4;"></div>
<div style="left:155px;top:208px;width:1px;height:19px;background:#ABABAB;"></div>
<div style="left:155px;top:228px;width:1px;height:377px;background:#D4D4D4;"></div>
<div style="left:314px;top:208px;width:1px;height:19px;background:#ABABAB;"></div>
<div style="left:314px;top:228px;width:1px;height:377px;background:#D4D4D4;"></div>
<div style="left:424px;top:208px;width:1px;height:19px;background:#ABABAB;"></div>
<div style="left:424px;top:228px;width:1px;height:377px;background:#D4D4D4;"></div>
<div style="left:535px;top:208px;width:1px;height:19px;background:#ABABAB;"></div>
<div style="left:535px;top:228px;width:1px;height:377px;background:#D4D4D4;"></div>
<div style="left:634px;top:208px;width:1px;height:19px;background:#ABABAB;"></div>
<div style="left:634px;top:228px;width:1px;height:377px;background:#D4D4D4;"></div>
<div style="left:720px;top:208px;width:1px;height:19px;background:#ABABAB;"></div>
<div style="left:720px;top:228px;width:1px;height:377px;background:#D4D4D4;"></div>
<div style="left:2px;top:227px;width:761px;height:1px;background:#ABABAB;"></div>
<div style="left:2px;top:247px;width:25px;height:1px;background:#ABABAB;"></div>
<div style="left:28px;top:247px;width:735px;height:1px;background:#D4D4D4;"></div>
<div style="left:2px;top:267px;width:25px;height:1px;background:#ABABAB;"></div>
<div style="left:28px;top:267px;width:735px;height:1px;background:#D4D4D4;"></div>
<div style="left:2px;top:298px;width:25px;height:1px;background:#ABABAB;"></div>
<div style="left:28px;top:298px;width:735px;height:1px;background:#D4D4D4;"></div>
<div style="left:2px;top:337px;width:25px;height:1px;background:#ABABAB;"></div>
<div style="left:28px;top:337px;width:735px;height:1px;background:#D4D4D4;"></div>
<div style="left:2px;top:357px;width:25px;height:1px;background:#ABABAB;"></div>
<div style="left:28px;top:357px;width:735px;height:1px;background:#D4D4D4;"></div>
<div style="left:2px;top:377px;width:25px;height:1px;background:#ABABAB;"></div>
<div style="left:28px;top:377px;width:735px;height:1px;background:#D4D4D4;"></div>
<div style="left:2px;top:397px;width:25px;height:1px;background:#ABABAB;"></div>
<div style="left:28px;top:397px;width:735px;height:1px;background:#D4D4D4;"></div>
<div style="left:2px;top:417px;width:25px;height:1px;background:#ABABAB;"></div>
<div style="left:28px;top:417px;width:735px;height:1px;background:#D4D4D4;"></div>
<div style="left:2px;top:437px;width:25px;height:1px;background:#ABABAB;"></div>
<div style="left:28px;top:437px;width:735px;height:1px;background:#D4D4D4;"></div>
<div style="left:2px;top:457px;width:25px;height:1px;background:#ABABAB;"></div>
<div style="left:28px;top:457px;width:735px;height:1px;background:#D4D4D4;"></div>
<div style="left:2px;top:477px;width:25px;height:1px;background:#ABABAB;"></div>
<div style="left:28px;top:477px;width:735px;height:1px;background:#D4D4D4;"></div>
<div style="left:2px;top:497px;width:25px;height:1px;background:#ABABAB;"></div>
<div style="left:28px;top:497px;width:735px;height:1px;background:#D4D4D4;"></div>
<div style="left:2px;top:517px;width:25px;height:1px;background:#ABABAB;"></div>
<div style="left:28px;top:517px;width:735px;height:1px;background:#D4D4D4;"></div>
<div style="left:2px;top:537px;width:25px;height:1px;background:#ABABAB;"></div>
<div style="left:28px;top:537px;width:735px;height:1px;background:#D4D4D4;"></div>
<div style="left:2px;top:557px;width:25px;height:1px;background:#ABABAB;"></div>
<div style="left:28px;top:557px;width:735px;height:1px;background:#D4D4D4;"></div>
<div style="left:2px;top:578px;width:25px;height:1px;background:#ABABAB;"></div>
<div style="left:28px;top:578px;width:735px;height:1px;background:#D4D4D4;"></div>
<div style="left:2px;top:598px;width:25px;height:1px;background:#ABABAB;"></div>
<div style="left:28px;top:598px;width:735px;height:1px;background:#D4D4D4;"></div>
<div style="left:763px;top:208px;width:1px;height:398px;background:#ABABAB;"></div>
<div style="left:2px;top:605px;width:762px;height:1px;background:#ABABAB;"></div>
<svg style="left:12px;top:212px;" width="13" height="12" viewBox="0 0 13 12"><path d="M12 0 V12 H0 Z" fill="#B4B4B4"/></svg>
<div class="t" style="left:55.50px;top:212.00px;font: 400 12px/12px 'Liberation Sans', sans-serif;color:#262626;">A</div>
<div class="t" style="left:119.50px;top:212.00px;font: 400 12px/12px 'Liberation Sans', sans-serif;color:#262626;">B</div>
<div class="t" style="left:230.50px;top:212.00px;font: 400 12px/12px 'Liberation Sans', sans-serif;color:#262626;">C</div>
<div class="t" style="left:365.00px;top:212.00px;font: 400 12px/12px 'Liberation Sans', sans-serif;color:#262626;">D</div>
<div class="t" style="left:476.00px;top:212.00px;font: 400 12px/12px 'Liberation Sans', sans-serif;color:#262626;">E</div>
<div class="t" style="left:581.50px;top:212.00px;font: 400 12px/12px 'Liberation Sans', sans-serif;color:#262626;">F</div>
<div class="t" style="left:673.00px;top:212.00px;font: 400 12px/12px 'Liberation Sans', sans-serif;color:#262626;">G</div>
<div style="left:762px;top:213px;width:1px;height:9px;background:#4A5A9A;"></div>
<div style="left:720px;top:226px;width:43px;height:2px;background:#217346;"></div>
<div style="left:26px;top:578px;width:2px;height:21px;background:#217346;"></div>
<div class="t" style="left:11.50px;top:233.00px;font: 400 12px/12px 'Liberation Sans', sans-serif;color:#262626;">1</div>
<div class="t" style="left:11.50px;top:253.00px;font: 400 12px/12px 'Liberation Sans', sans-serif;color:#262626;">2</div>
<div class="t" style="left:11.50px;top:284.00px;font: 400 12px/12px 'Liberation Sans', sans-serif;color:#262626;">3</div>
<div class="t" style="left:11.50px;top:323.00px;font: 400 12px/12px 'Liberation Sans', sans-serif;color:#262626;">4</div>
<div class="t" style="left:11.50px;top:343.00px;font: 400 12px/12px 'Liberation Sans', sans-serif;color:#262626;">5</div>
<div class="t" style="left:11.50px;top:363.00px;font: 400 12px/12px 'Liberation Sans', sans-serif;color:#262626;">6</div>
<div class="t" style="left:11.50px;top:383.00px;font: 400 12px/12px 'Liberation Sans', sans-serif;color:#262626;">7</div>
<div class="t" style="left:11.50px;top:403.00px;font: 400 12px/12px 'Liberation Sans', sans-serif;color:#262626;">8</div>
<div class="t" style="left:11.50px;top:423.00px;font: 400 12px/12px 'Liberation Sans', sans-serif;color:#262626;">9</div>
<div class="t" style="left:8.16px;top:443.00px;font: 400 12px/12px 'Liberation Sans', sans-serif;color:#262626;">10</div>
<div class="t" style="left:8.61px;top:463.00px;font: 400 12px/12px 'Liberation Sans', sans-serif;color:#262626;">11</div>
<div class="t" style="left:8.16px;top:483.00px;font: 400 12px/12px 'Liberation Sans', sans-serif;color:#262626;">12</div>
<div class="t" style="left:8.16px;top:503.00px;font: 400 12px/12px 'Liberation Sans', sans-serif;color:#262626;">13</div>
<div class="t" style="left:8.16px;top:523.00px;font: 400 12px/12px 'Liberation Sans', sans-serif;color:#262626;">14</div>
<div class="t" style="left:8.16px;top:543.00px;font: 400 12px/12px 'Liberation Sans', sans-serif;color:#262626;">15</div>
<div class="t" style="left:8.16px;top:564.00px;font: 400 12px/12px 'Liberation Sans', sans-serif;color:#262626;">16</div>
<div class="t" style="left:8.16px;top:584.00px;font: 400 12px/12px 'Liberation Sans', sans-serif;color:#1F5F3A;">17</div>
<div style="left:156px;top:299px;width:478px;height:38px;background:#5B9BD5;"></div>
<div style="left:156px;top:338px;width:478px;height:19px;background:#DDEBF7;"></div>
<div style="left:156px;top:358px;width:478px;height:19px;background:#FFFFFF;"></div>
<div style="left:156px;top:378px;width:478px;height:19px;background:#DDEBF7;"></div>
<div style="left:156px;top:398px;width:478px;height:19px;background:#FFFFFF;"></div>
<div style="left:156px;top:418px;width:478px;height:19px;background:#DDEBF7;"></div>
<div style="left:156px;top:438px;width:478px;height:19px;background:#FFFFFF;"></div>
<div style="left:156px;top:458px;width:478px;height:19px;background:#DDEBF7;"></div>
<div style="left:156px;top:478px;width:478px;height:19px;background:#FFFFFF;"></div>
<div style="left:156px;top:498px;width:478px;height:19px;background:#DDEBF7;"></div>
<div style="left:156px;top:518px;width:478px;height:19px;background:#FFFFFF;"></div>
<div style="left:155px;top:298px;width:480px;height:1px;background:#000000;"></div>
<div style="left:155px;top:337px;width:480px;height:1px;background:#000000;"></div>
<div style="left:155px;top:357px;width:480px;height:1px;background:#000000;"></div>
<div style="left:155px;top:377px;width:480px;height:1px;background:#000000;"></div>
<div style="left:155px;top:397px;width:480px;height:1px;background:#000000;"></div>
<div style="left:155px;top:417px;width:480px;height:1px;background:#000000;"></div>
<div style="left:155px;top:437px;width:480px;height:1px;background:#000000;"></div>
<div style="left:155px;top:457px;width:480px;height:1px;background:#000000;"></div>
<div style="left:155px;top:477px;width:480px;height:1px;background:#000000;"></div>
<div style="left:155px;top:497px;width:480px;height:1px;background:#000000;"></div>
<div style="left:155px;top:517px;width:480px;height:1px;background:#000000;"></div>
<div style="left:155px;top:537px;width:480px;height:1px;background:#000000;"></div>
<div style="left:155px;top:298px;width:1px;height:240px;background:#000000;"></div>
<div style="left:314px;top:298px;width:1px;height:240px;background:#000000;"></div>
<div style="left:424px;top:298px;width:1px;height:240px;background:#000000;"></div>
<div style="left:535px;top:298px;width:1px;height:240px;background:#000000;"></div>
<div style="left:634px;top:298px;width:1px;height:240px;background:#000000;"></div>
<svg style="left:630px;top:533px;" width="4" height="4" viewBox="0 0 4 4"><path d="M3 0 H4 V4 H0 V3 H1 V2 H2 V1 H3 Z" fill="#3B57C4"/></svg>
<div class="t" style="left:186.20px;top:304.00px;font: 700 13px/13px 'Liberation Sans', sans-serif;color:#FFFFFF;transform:scaleX(1.1138);transform-origin:0 0;">Product Name</div>
<div class="t" style="left:333.20px;top:304.00px;font: 700 13px/13px 'Liberation Sans', sans-serif;color:#FFFFFF;transform:scaleX(1.0750);transform-origin:0 0;">Total Sales</div>
<div class="t" style="left:436.80px;top:304.00px;font: 700 13px/13px 'Liberation Sans', sans-serif;color:#FFFFFF;transform:scaleX(1.0484);transform-origin:0 0;">Gross Profits</div>
<div class="t" style="left:567.70px;top:304.00px;font: 700 13px/13px 'Liberation Sans', sans-serif;color:#FFFFFF;transform:scaleX(0.9753);transform-origin:0 0;">Costs</div>
<div style="left:297px;top:319px;width:14px;height:14px;border:1px solid #BFBFBF;background:linear-gradient(#FFFFFF,#EDEDED);"></div>
<svg style="left:301px;top:325px;" width="8" height="5" viewBox="0 0 8 5"><path d="M0 0.5 H8 L4 4.5 Z" fill="#595959"/></svg>
<div style="left:407px;top:319px;width:14px;height:14px;border:1px solid #BFBFBF;background:linear-gradient(#FFFFFF,#EDEDED);"></div>
<svg style="left:411px;top:325px;" width="8" height="5" viewBox="0 0 8 5"><path d="M0 0.5 H8 L4 4.5 Z" fill="#595959"/></svg>
<div style="left:518px;top:319px;width:14px;height:14px;border:1px solid #BFBFBF;background:linear-gradient(#FFFFFF,#EDEDED);"></div>
<svg style="left:522px;top:325px;" width="8" height="5" viewBox="0 0 8 5"><path d="M0 0.5 H8 L4 4.5 Z" fill="#595959"/></svg>
<div style="left:617px;top:319px;width:14px;height:14px;border:1px solid #BFBFBF;background:linear-gradient(#FFFFFF,#EDEDED);"></div>
<svg style="left:621px;top:325px;" width="8" height="5" viewBox="0 0 8 5"><path d="M0 0.5 H8 L4 4.5 Z" fill="#595959"/></svg>
<div class="t" style="left:157.86px;top:343.00px;font: 400 12.5px/12.5px 'Liberation Sans', sans-serif;color:#000000;transform:scaleX(1.1405);transform-origin:0 0;">Minnki Pälsii</div>
<div class="t" style="left:320.60px;top:343.00px;font: 400 12.5px/12.5px 'Liberation Sans', sans-serif;color:#000000;transform:scaleX(0.9429);transform-origin:0 0;">$</div>
<div class="t" style="left:430.60px;top:343.00px;font: 400 12.5px/12.5px 'Liberation Sans', sans-serif;color:#000000;transform:scaleX(0.9429);transform-origin:0 0;">$</div>
<div class="t" style="left:543.60px;top:343.00px;font: 400 12.5px/12.5px 'Liberation Sans', sans-serif;color:#000000;transform:scaleX(0.9429);transform-origin:0 0;">$</div>
<div class="t" style="left:354.39px;top:343.00px;font: 400 12.5px/12.5px 'Liberation Sans', sans-serif;color:#000000;">408,674.51</div>
<div class="t" style="left:473.54px;top:343.00px;font: 400 12.5px/12.5px 'Liberation Sans', sans-serif;color:#000000;">81,839.94</div>
<div class="t" style="left:564.09px;top:343.00px;font: 400 12.5px/12.5px 'Liberation Sans', sans-serif;color:#000000;">326,834.56</div>
<div class="t" style="left:157.90px;top:363.00px;font: 400 12.5px/12.5px 'Liberation Sans', sans-serif;color:#000000;transform:scaleX(1.1032);transform-origin:0 0;">Davenport</div>
<div class="t" style="left:320.60px;top:363.00px;font: 400 12.5px/12.5px 'Liberation Sans', sans-serif;color:#000000;transform:scaleX(0.9429);transform-origin:0 0;">$</div>
<div class="t" style="left:430.60px;top:363.00px;font: 400 12.5px/12.5px 'Liberation Sans', sans-serif;color:#000000;transform:scaleX(0.9429);transform-origin:0 0;">$</div>
<div class="t" style="left:543.60px;top:363.00px;font: 400 12.5px/12.5px 'Liberation Sans', sans-serif;color:#000000;transform:scaleX(0.9429);transform-origin:0 0;">$</div>
<div class="t" style="left:361.34px;top:363.00px;font: 400 12.5px/12.5px 'Liberation Sans', sans-serif;color:#000000;">97,370.08</div>
<div class="t" style="left:473.54px;top:363.00px;font: 400 12.5px/12.5px 'Liberation Sans', sans-serif;color:#000000;">20,946.24</div>
<div class="t" style="left:571.04px;top:363.00px;font: 400 12.5px/12.5px 'Liberation Sans', sans-serif;color:#000000;">76,423.83</div>
<div class="t" style="left:159.00px;top:383.00px;font: 400 12.5px/12.5px 'Liberation Sans', sans-serif;color:#000000;transform:scaleX(1.0378);transform-origin:0 0;">Snake Boots</div>
<div class="t" style="left:320.60px;top:383.00px;font: 400 12.5px/12.5px 'Liberation Sans', sans-serif;color:#000000;transform:scaleX(0.9429);transform-origin:0 0;">$</div>
<div class="t" style="left:430.60px;top:383.00px;font: 400 12.5px/12.5px 'Liberation Sans', sans-serif;color:#000000;transform:scaleX(0.9429);transform-origin:0 0;">$</div>
<div class="t" style="left:543.60px;top:383.00px;font: 400 12.5px/12.5px 'Liberation Sans', sans-serif;color:#000000;transform:scaleX(0.9429);transform-origin:0 0;">$</div>
<div class="t" style="left:361.34px;top:383.00px;font: 400 12.5px/12.5px 'Liberation Sans', sans-serif;color:#000000;">91,025.31</div>
<div class="t" style="left:473.54px;top:383.00px;font: 400 12.5px/12.5px 'Liberation Sans', sans-serif;color:#000000;">19,549.14</div>
<div class="t" style="left:571.04px;top:383.00px;font: 400 12.5px/12.5px 'Liberation Sans', sans-serif;color:#000000;">71,476.17</div>
<div class="t" style="left:157.98px;top:403.00px;font: 400 12.5px/12.5px 'Liberation Sans', sans-serif;color:#000000;transform:scaleX(1.0207);transform-origin:0 0;">Le Baby Dress</div>
<div class="t" style="left:320.60px;top:403.00px;font: 400 12.5px/12.5px 'Liberation Sans', sans-serif;color:#000000;transform:scaleX(0.9429);transform-origin:0 0;">$</div>
<div class="t" style="left:430.60px;top:403.00px;font: 400 12.5px/12.5px 'Liberation Sans', sans-serif;color:#000000;transform:scaleX(0.9429);transform-origin:0 0;">$</div>
<div class="t" style="left:543.60px;top:403.00px;font: 400 12.5px/12.5px 'Liberation Sans', sans-serif;color:#000000;transform:scaleX(0.9429);transform-origin:0 0;">$</div>
<div class="t" style="left:361.34px;top:403.00px;font: 400 12.5px/12.5px 'Liberation Sans', sans-serif;color:#000000;">50,607.82</div>
<div class="t" style="left:473.54px;top:403.00px;font: 400 12.5px/12.5px 'Liberation Sans', sans-serif;color:#000000;">10,027.40</div>
<div class="t" style="left:571.04px;top:403.00px;font: 400 12.5px/12.5px 'Liberation Sans', sans-serif;color:#000000;">40,580.42</div>
<div class="t" style="left:157.95px;top:423.00px;font: 400 12.5px/12.5px 'Liberation Sans', sans-serif;color:#000000;transform:scaleX(1.0526);transform-origin:0 0;">High Heels Shoes</div>
<div class="t" style="left:320.60px;top:423.00px;font: 400 12.5px/12.5px 'Liberation Sans', sans-serif;color:#000000;transform:scaleX(0.9429);transform-origin:0 0;">$</div>
<div class="t" style="left:430.60px;top:423.00px;font: 400 12.5px/12.5px 'Liberation Sans', sans-serif;color:#000000;transform:scaleX(0.9429);transform-origin:0 0;">$</div>
<div class="t" style="left:543.60px;top:423.00px;font: 400 12.5px/12.5px 'Liberation Sans', sans-serif;color:#000000;transform:scaleX(0.9429);transform-origin:0 0;">$</div>
<div class="t" style="left:361.34px;top:423.00px;font: 400 12.5px/12.5px 'Liberation Sans', sans-serif;color:#000000;">50,604.67</div>
<div class="t" style="left:473.54px;top:423.00px;font: 400 12.5px/12.5px 'Liberation Sans', sans-serif;color:#000000;">10,521.16</div>
<div class="t" style="left:571.04px;top:423.00px;font: 400 12.5px/12.5px 'Liberation Sans', sans-serif;color:#000000;">40,083.51</div>
<div class="t" style="left:159.00px;top:443.00px;font: 400 12.5px/12.5px 'Liberation Sans', sans-serif;color:#000000;transform:scaleX(1.0310);transform-origin:0 0;">Jumpin Jack Flash Dress</div>
<div class="t" style="left:320.60px;top:443.00px;font: 400 12.5px/12.5px 'Liberation Sans', sans-serif;color:#000000;transform:scaleX(0.9429);transform-origin:0 0;">$</div>
<div class="t" style="left:430.60px;top:443.00px;font: 400 12.5px/12.5px 'Liberation Sans', sans-serif;color:#000000;transform:scaleX(0.9429);transform-origin:0 0;">$</div>
<div class="t" style="left:543.60px;top:443.00px;font: 400 12.5px/12.5px 'Liberation Sans', sans-serif;color:#000000;transform:scaleX(0.9429);transform-origin:0 0;">$</div>
<div class="t" style="left:361.34px;top:443.00px;font: 400 12.5px/12.5px 'Liberation Sans', sans-serif;color:#000000;">46,550.00</div>
<div class="t" style="left:480.49px;top:443.00px;font: 400 12.5px/12.5px 'Liberation Sans', sans-serif;color:#000000;">9,165.03</div>
<div class="t" style="left:571.04px;top:443.00px;font: 400 12.5px/12.5px 'Liberation Sans', sans-serif;color:#000000;">37,384.96</div>
<div class="t" style="left:159.00px;top:463.00px;font: 400 12.5px/12.5px 'Liberation Sans', sans-serif;color:#000000;transform:scaleX(1.0918);transform-origin:0 0;">Terence Top</div>
<div class="t" style="left:320.60px;top:463.00px;font: 400 12.5px/12.5px 'Liberation Sans', sans-serif;color:#000000;transform:scaleX(0.9429);transform-origin:0 0;">$</div>
<div class="t" style="left:430.60px;top:463.00px;font: 400 12.5px/12.5px 'Liberation Sans', sans-serif;color:#000000;transform:scaleX(0.9429);transform-origin:0 0;">$</div>
<div class="t" style="left:543.60px;top:463.00px;font: 400 12.5px/12.5px 'Liberation Sans', sans-serif;color:#000000;transform:scaleX(0.9429);transform-origin:0 0;">$</div>
<div class="t" style="left:361.34px;top:463.00px;font: 400 12.5px/12.5px 'Liberation Sans', sans-serif;color:#000000;">45,288.56</div>
<div class="t" style="left:480.49px;top:463.00px;font: 400 12.5px/12.5px 'Liberation Sans', sans-serif;color:#000000;">8,865.95</div>
<div class="t" style="left:571.04px;top:463.00px;font: 400 12.5px/12.5px 'Liberation Sans', sans-serif;color:#000000;">36,422.61</div>
<div class="t" style="left:159.00px;top:483.00px;font: 400 12.5px/12.5px 'Liberation Sans', sans-serif;color:#000000;transform:scaleX(1.0773);transform-origin:0 0;">Small Crocodile Boots</div>
<div class="t" style="left:320.60px;top:483.00px;font: 400 12.5px/12.5px 'Liberation Sans', sans-serif;color:#000000;transform:scaleX(0.9429);transform-origin:0 0;">$</div>
<div class="t" style="left:430.60px;top:483.00px;font: 400 12.5px/12.5px 'Liberation Sans', sans-serif;color:#000000;transform:scaleX(0.9429);transform-origin:0 0;">$</div>
<div class="t" style="left:543.60px;top:483.00px;font: 400 12.5px/12.5px 'Liberation Sans', sans-serif;color:#000000;transform:scaleX(0.9429);transform-origin:0 0;">$</div>
<div class="t" style="left:361.34px;top:483.00px;font: 400 12.5px/12.5px 'Liberation Sans', sans-serif;color:#000000;">42,222.95</div>
<div class="t" style="left:480.49px;top:483.00px;font: 400 12.5px/12.5px 'Liberation Sans', sans-serif;color:#000000;">8,510.22</div>
<div class="t" style="left:571.04px;top:483.00px;font: 400 12.5px/12.5px 'Liberation Sans', sans-serif;color:#000000;">33,712.73</div>
<div class="t" style="left:159.00px;top:503.00px;font: 400 12.5px/12.5px 'Liberation Sans', sans-serif;color:#000000;transform:scaleX(1.0329);transform-origin:0 0;">Okkaba Skin Jackets</div>
<div class="t" style="left:320.60px;top:503.00px;font: 400 12.5px/12.5px 'Liberation Sans', sans-serif;color:#000000;transform:scaleX(0.9429);transform-origin:0 0;">$</div>
<div class="t" style="left:430.60px;top:503.00px;font: 400 12.5px/12.5px 'Liberation Sans', sans-serif;color:#000000;transform:scaleX(0.9429);transform-origin:0 0;">$</div>
<div class="t" style="left:543.60px;top:503.00px;font: 400 12.5px/12.5px 'Liberation Sans', sans-serif;color:#000000;transform:scaleX(0.9429);transform-origin:0 0;">$</div>
<div class="t" style="left:361.34px;top:503.00px;font: 400 12.5px/12.5px 'Liberation Sans', sans-serif;color:#000000;">38,085.37</div>
<div class="t" style="left:480.49px;top:503.00px;font: 400 12.5px/12.5px 'Liberation Sans', sans-serif;color:#000000;">8,318.94</div>
<div class="t" style="left:571.04px;top:503.00px;font: 400 12.5px/12.5px 'Liberation Sans', sans-serif;color:#000000;">29,766.43</div>
<div class="t" style="left:157.94px;top:523.00px;font: 400 12.5px/12.5px 'Liberation Sans', sans-serif;color:#000000;transform:scaleX(1.0596);transform-origin:0 0;">Feiss Fleece Trousers</div>
<div class="t" style="left:320.60px;top:523.00px;font: 400 12.5px/12.5px 'Liberation Sans', sans-serif;color:#000000;transform:scaleX(0.9429);transform-origin:0 0;">$</div>
<div class="t" style="left:430.60px;top:523.00px;font: 400 12.5px/12.5px 'Liberation Sans', sans-serif;color:#000000;transform:scaleX(0.9429);transform-origin:0 0;">$</div>
<div class="t" style="left:543.60px;top:523.00px;font: 400 12.5px/12.5px 'Liberation Sans', sans-serif;color:#000000;transform:scaleX(0.9429);transform-origin:0 0;">$</div>
<div class="t" style="left:361.34px;top:523.00px;font: 400 12.5px/12.5px 'Liberation Sans', sans-serif;color:#000000;">38,005.07</div>
<div class="t" style="left:480.49px;top:523.00px;font: 400 12.5px/12.5px 'Liberation Sans', sans-serif;color:#000000;">9,033.44</div>
<div class="t" style="left:571.04px;top:523.00px;font: 400 12.5px/12.5px 'Liberation Sans', sans-serif;color:#000000;">28,971.63</div>
<div class="t" style="left:267.40px;top:563.00px;font: 700 13px/13px 'Liberation Sans', sans-serif;color:#000000;transform:scaleX(1.0722);transform-origin:0 0;">Totals:</div>
<div class="t" style="left:322.00px;top:563.00px;font: 700 13px/13px 'Liberation Sans', sans-serif;color:#548235;transform:scaleX(0.9250);transform-origin:0 0;">$</div>
<div class="t" style="left:345.00px;top:563.00px;font: 700 13px/13px 'Liberation Sans', sans-serif;color:#548235;transform:scaleX(1.1044);transform-origin:0 0;">908,434.32</div>
<div class="t" style="left:431.80px;top:563.00px;font: 700 13px/13px 'Liberation Sans', sans-serif;color:#548235;transform:scaleX(0.9000);transform-origin:0 0;">$</div>
<div class="t" style="left:456.40px;top:563.00px;font: 700 13px/13px 'Liberation Sans', sans-serif;color:#548235;transform:scaleX(1.1044);transform-origin:0 0;">186,777.46</div>
<div class="t" style="left:543.30px;top:563.00px;font: 700 13px/13px 'Liberation Sans', sans-serif;color:#FF0000;transform:scaleX(0.9875);transform-origin:0 0;">$</div>
<div class="t" style="left:556.00px;top:563.00px;font: 700 13px/13px 'Liberation Sans', sans-serif;color:#FF0000;transform:scaleX(1.0889);transform-origin:0 0;">721,656.85</div>
<div style="left:719px;top:577px;width:50px;height:19px;border:2px solid #217346;"></div>
<div style="left:764px;top:208px;width:21px;height:398px;background:#E6E6E6;"></div>
<div style="left:763px;top:208px;width:1px;height:18px;background:#E6E6E6;"></div>
<div style="left:763px;top:226px;width:1px;height:380px;background:#ABABAB;"></div>
<svg style="left:724px;top:580px;" width="18" height="18" viewBox="0 0 18 18"><path d="M5.5 1.5 H10.5 V5.5 H14.5 V10.5 H10.5 V14.5 H5.5 V10.5 H1.5 V5.5 H5.5 Z" fill="#000" transform="translate(1,1)"/><path d="M5.5 1.5 H10.5 V5.5 H14.5 V10.5 H10.5 V14.5 H5.5 V10.5 H1.5 V5.5 H5.5 Z" fill="#fff" stroke="#000" stroke-width="1.5"/></svg>
<div style="left:767px;top:210px;width:13px;height:13px;border:1px solid #ABABAB;background:#fff;"></div>
<svg style="left:770px;top:214px;" width="9" height="6" viewBox="0 0 9 6"><path d="M0.5 5 H8.5 L4.5 0.8 Z" fill="#6D6D6D"/></svg>
<div style="left:767px;top:225px;width:13px;height:309px;border:1px solid #ABABAB;background:#fff;"></div>
<div style="left:767px;top:536px;width:15px;height:56px;background:#DADADA;"></div>
<div style="left:767px;top:591px;width:13px;height:13px;border:1px solid #ABABAB;background:#fff;"></div>
<svg style="left:770px;top:595px;" width="9" height="6" viewBox="0 0 9 6"><path d="M0.5 1 H8.5 L4.5 5.2 Z" fill="#6D6D6D"/></svg>
<div style="left:2px;top:633px;width:783px;height:1px;background:#C8C8C8;"></div>
<svg style="left:28px;top:613px;" width="7" height="10" viewBox="0 0 7 10"><path d="M5.5 0.5 V9.5 L0.8 5 Z" fill="#B0B0B0"/></svg>
<svg style="left:57px;top:613px;" width="7" height="10" viewBox="0 0 7 10"><path d="M0.8 0.5 V9.5 L5.5 5 Z" fill="#B0B0B0"/></svg>
<div style="left:103px;top:606px;width:63px;height:24px;background:#FFFFFF;"></div>
<div style="left:102px;top:605px;width:1px;height:25px;background:#ABABAB;"></div>
<div style="left:166px;top:605px;width:1px;height:25px;background:#ABABAB;"></div>
<div style="left:102px;top:628px;width:65px;height:2px;background:#217346;"></div>
<div class="t" style="left:114.00px;top:612.00px;font: 700 13px/13px 'Liberation Sans', sans-serif;color:#217346;transform:scaleX(0.9434);transform-origin:0 0;">Sheet1</div>
<svg style="left:199px;top:610px;" width="18" height="18" viewBox="0 0 18 18"><circle cx="9" cy="9" r="7.6" fill="none" stroke="#6B6B6B" stroke-width="1.2"/><path d="M9 4.8 V13.2 M4.8 9 H13.2" stroke="#6B6B6B" stroke-width="1.8"/></svg>
<div style="left:472px;top:614px;width:2px;height:2px;background:#ABABAB;"></div>
<div style="left:472px;top:618px;width:2px;height:2px;background:#ABABAB;"></div>
<div style="left:472px;top:622px;width:2px;height:2px;background:#ABABAB;"></div>
<div style="left:489px;top:612px;width:13px;height:13px;border:1px solid #ABABAB;background:#fff;"></div>
<svg style="left:493px;top:615px;" width="6" height="9" viewBox="0 0 6 9"><path d="M5 0.5 V8.5 L0.8 4.5 Z" fill="#6D6D6D"/></svg>
<div style="left:504px;top:612px;width:212px;height:13px;border:1px solid #ABABAB;background:#fff;"></div>
<div style="left:718px;top:612px;width:31px;height:15px;background:#DADADA;"></div>
<div style="left:751px;top:612px;width:13px;height:13px;border:1px solid #ABABAB;background:#fff;"></div>
<svg style="left:756px;top:615px;" width="6" height="9" viewBox="0 0 6 9"><path d="M0.8 0.5 V8.5 L5 4.5 Z" fill="#6D6D6D"/></svg>
<div style="left:488px;top:634px;width:38px;height:21px;background:#C8C6C4;"></div>
<svg style="left:499px;top:636px;" width="15" height="15" viewBox="0 0 15 15"><path d="M1.5 1.5 H13.5 V13.5 H1.5 Z M1.5 5.5 H13.5 M1.5 9.5 H13.5 M5.5 1.5 V13.5 M9.5 1.5 V13.5" fill="none" stroke="#6A6A6A" stroke-width="1.1"/></svg>
<svg style="left:537px;top:636px;" width="16" height="15" viewBox="0 0 16 15"><rect x="1.5" y="1.5" width="13" height="12" fill="none" stroke="#6A6A6A" stroke-width="1.2"/><rect x="4.5" y="3.5" width="7" height="8.5" fill="none" stroke="#6A6A6A" stroke-width="1"/><path d="M6 5.8 H10 M6 7.8 H10 M6 9.8 H10" stroke="#6A6A6A" stroke-width="1"/></svg>
<svg style="left:575px;top:636px;" width="16" height="15" viewBox="0 0 16 15"><rect x="1.5" y="1.5" width="13" height="12" fill="none" stroke="#6A6A6A" stroke-width="1.2"/><path d="M1.5 8.5 H9.5 V1.5 M5.5 1.5 V8.5" fill="none" stroke="#6A6A6A" stroke-width="1.1"/></svg>
<div style="left:607px;top:643px;width:6px;height:2px;background:#5A5A5A;"></div>
<div style="left:618px;top:643px;width:98px;height:1px;background:#A6A6A6;"></div>
<div style="left:665px;top:638px;width:5px;height:11px;background:#6D6D6D;"></div>
<div style="left:720px;top:643px;width:8px;height:2px;background:#5A5A5A;"></div>
<div style="left:723px;top:640px;width:2px;height:8px;background:#5A5A5A;"></div>
<div class="t" style="left:739.80px;top:637.00px;font: 400 12px/12px 'Liberation Sans', sans-serif;color:#605E5C;transform:scaleX(0.8285);transform-origin:0 0;">100%</div>
<div style="left:0px;top:0px;width:1px;height:656px;background:#B9B6B9;"></div>
<div style="left:1px;top:0px;width:1px;height:656px;background:#1F6E41;"></div>
<div style="left:2px;top:36px;width:1px;height:125px;background:#FFFFFF;"></div>
<div style="left:2px;top:162px;width:1px;height:46px;background:#EDEDED;"></div>
<div style="left:0px;top:655px;width:785px;height:1px;background:#217346;"></div>
</div></body></html>
